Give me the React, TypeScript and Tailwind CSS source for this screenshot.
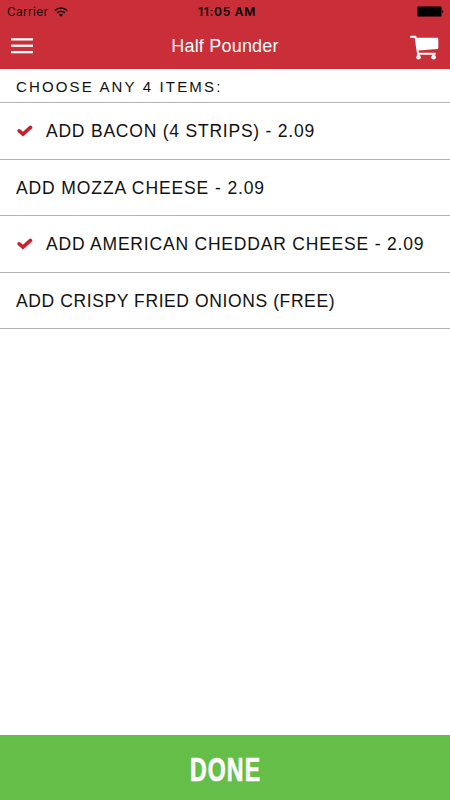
import clsx from "clsx";

type Item = {
  label: string;
  checked: boolean;
  tracking: string;
};

const items: Item[] = [
  { label: "ADD BACON (4 STRIPS) - 2.09", checked: true, tracking: "tracking-[0.78px]" },
  { label: "ADD MOZZA CHEESE - 2.09", checked: false, tracking: "tracking-[0.89px]" },
  { label: "ADD AMERICAN CHEDDAR CHEESE - 2.09", checked: true, tracking: "tracking-[0.8px]" },
  { label: "ADD CRISPY FRIED ONIONS (FREE)", checked: false, tracking: "tracking-[0.6px]" },
];

function WifiIcon() {
  return (
    <svg className="h-[10px] w-[14px]" viewBox="0 0 14 10" fill="none">
      <path
        d="M0.8 3.6C4.3 0.2 9.7 0.2 13.2 3.6M3 5.9C5.3 3.8 8.7 3.8 11 5.9"
        stroke="#1d0507"
        strokeWidth="1.6"
      />
      <path d="M4.8 7.6C6 6.5 8 6.5 9.2 7.6L7 9.8Z" fill="#1d0507" />
    </svg>
  );
}

function BatteryIcon() {
  return (
    <svg className="h-[11px] w-[27px]" viewBox="0 0 27 11">
      <rect x="0.5" y="0.5" width="24" height="10" rx="1" fill="#000" stroke="#5a1118" strokeWidth="0.5" />
      <path d="M25.4 3.8C26.6 4.2 26.6 6.8 25.4 7.2Z" fill="#000" />
    </svg>
  );
}

function MenuIcon() {
  return (
    <svg className="h-[16px] w-[22px]" viewBox="0 0 22 16" fill="#fff">
      <rect y="0.2" width="22" height="2.3" />
      <rect y="6.6" width="22" height="2.3" />
      <rect y="13" width="22" height="2.3" />
    </svg>
  );
}

function CartIcon() {
  return (
    <svg className="h-[26px] w-[30px]" viewBox="0 0 30 26" fill="#fff">
      <path d="M1.9 0.8H7.1L7.7 2.8H28.2Q29.3 2.8 29.3 3.8V13Q29.3 14 28.2 14.1L9.6 15.5L9.9 17.8H26.6V19.8H8.2L5.6 2.8H1.9Q0.9 2.8 0.9 1.8T1.9 0.8Z" />
      <circle cx="9.5" cy="22.3" r="2.3" />
      <circle cx="24.6" cy="22.3" r="2.3" />
      <path d="M8.4 18H10.4V22H8.4ZM23.6 18H25.4V22H23.6Z" />
    </svg>
  );
}

function CheckIcon() {
  return (
    <svg className="ml-[1px] h-[12px] w-[16px]" viewBox="0 0 16 12" fill="none">
      <path
        d="M2.2 5.8L6 9.2L13.5 2.4"
        stroke="#c8202d"
        strokeWidth="3.6"
        strokeLinecap="round"
      />
    </svg>
  );
}

function Header() {
  return (
    <header className="h-[69px] bg-[#ca2f39]">
      <div className="grid h-[23px] grid-cols-3 items-center pr-[6px] pl-[7px] font-[Inter,sans-serif] text-[12px] leading-none text-[#1d0507]">
        <div className="flex items-center gap-[6px]">
          <span className="tracking-[0.3px]">Carrier</span>
          <WifiIcon />
        </div>
        <span className="pl-[3px] text-center font-semibold tracking-[0.7px] text-black">
          11:05 AM
        </span>
        <div className="flex justify-end">
          <BatteryIcon />
        </div>
      </div>
      <div className="grid h-[46px] grid-cols-[1fr_auto_1fr] items-center pr-[11px] pl-[11px]">
        <button>
          <MenuIcon />
        </button>
        <h1 className="text-[18px] tracking-[0.2px] text-white">Half Pounder</h1>
        <button className="flex justify-end pt-[3px]">
          <CartIcon />
        </button>
      </div>
    </header>
  );
}

const App = () => {
  return (
    <main className="flex h-screen w-full flex-col bg-white font-['Liberation_Sans',Arial,sans-serif] text-[#111]">
      <Header />
      <h2 className="flex h-[34px] items-center border-b border-[#b4b4b4] pt-[3px] pl-4 text-[15px] tracking-[2.15px]">
        CHOOSE ANY 4 ITEMS:
      </h2>
      <ul>
        {items.map((item) => (
          <li
            key={item.label}
            className={clsx(
              "flex h-[56.5px] items-center border-b border-[#b4b4b4] pt-[1px] pl-4 text-[17.5px] whitespace-nowrap",
              item.tracking,
            )}
          >
            <span className={clsx("w-[30px]", !item.checked && "hidden")}>
              <CheckIcon />
            </span>
            {item.label}
          </li>
        ))}
      </ul>
      <button className="mt-auto flex h-[65px] items-center justify-center bg-[#64be48] pt-[5px] text-[33px] font-bold text-white">
        <span className="scale-x-[0.7] pl-[2px] tracking-[1.6px] [-webkit-text-stroke:0.7px_white]">
          DONE
        </span>
      </button>
    </main>
  );
};

export default App;
